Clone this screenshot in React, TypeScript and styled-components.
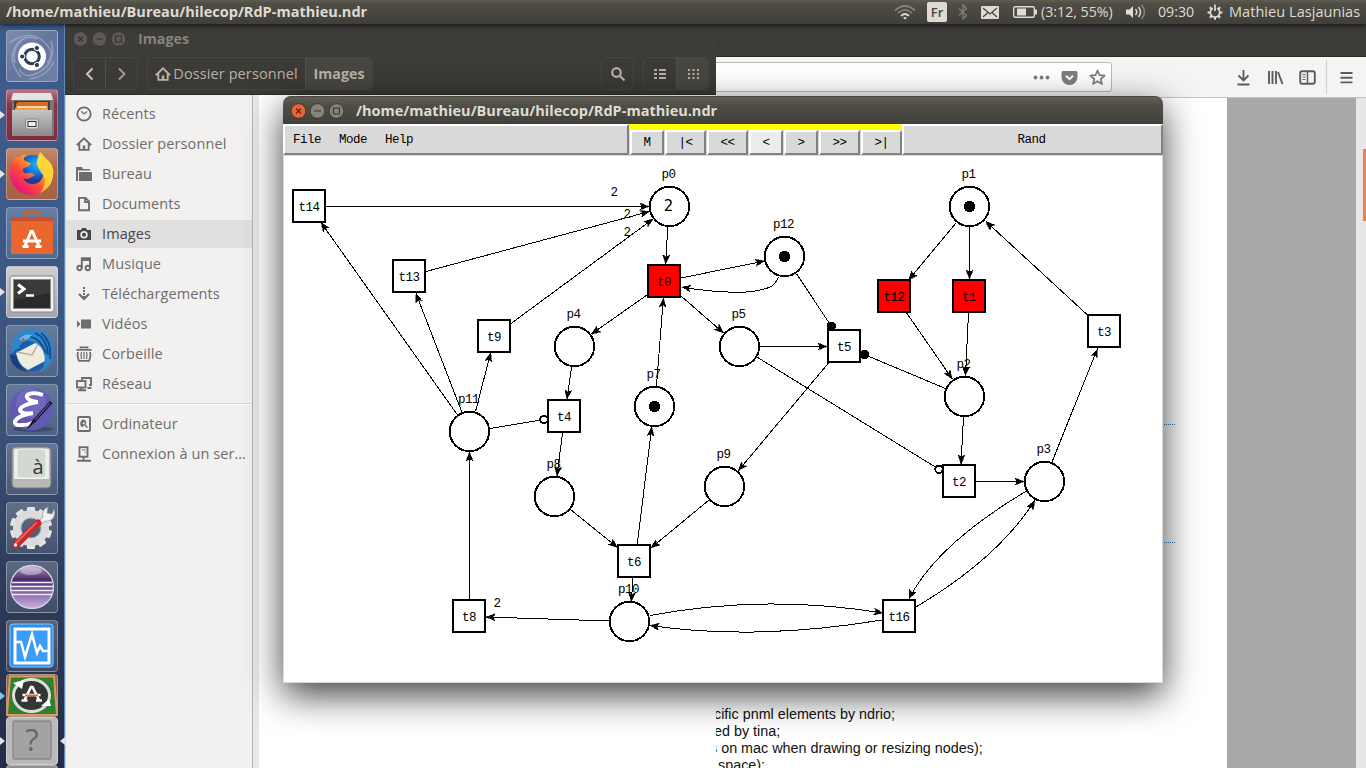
import React from "react";
import styled, { createGlobalStyle, css } from "styled-components";

const GlobalStyle = createGlobalStyle`
  * { box-sizing: border-box; }
  html, body { margin: 0; padding: 0; }
  body { overflow: hidden; }
  svg { display: block; flex: none; }
`;

const uiFont = `"Open Sans", "Noto Sans", sans-serif`;
const monoFont = `"Liberation Mono", "DejaVu Sans Mono", monospace`;

const Desktop = styled.div`
  position: relative;
  display: flex;
  flex-direction: column;
  width: 1366px;
  height: 768px;
  overflow: hidden;
  background: #2b3a5c;
  font-family: ${uiFont};
  font-size: 14.5px;
`;

const Label = styled.span<{ $size?: number; $bold?: boolean; $spacing?: number }>`
  font-size: ${(p) => p.$size ?? 14.5}px;
  font-weight: ${(p) => (p.$bold ? 700 : 400)};
  letter-spacing: ${(p) => p.$spacing ?? 0}px;
  line-height: 20px;
  white-space: nowrap;
`;

/* ---------- top panel ---------- */

const TopPanel = styled.header`
  display: flex;
  align-items: center;
  justify-content: space-between;
  height: 24px;
  flex: none;
  padding: 0 6px;
  color: #dfdbd2;
  background: linear-gradient(#5f5d50, #504e46 15%, #3f3e38);
  box-shadow: 0 1px 5px rgba(0, 0, 0, 0.75);
  z-index: 3;
`;

const Indicators = styled.div`
  display: flex;
  align-items: center;
  height: 24px;
`;

const Indicator = styled.div<{ $width: number; $gap?: number }>`
  display: flex;
  align-items: center;
  gap: ${(p) => p.$gap ?? 4}px;
  width: ${(p) => p.$width}px;
  flex: none;
`;

const LanguageBadge = styled.span`
  width: 20px;
  height: 20px;
  border-radius: 2px;
  background: #dfdbd2;
  color: #45433d;
  font-size: 13px;
  font-weight: 600;
  line-height: 20px;
  text-align: center;
`;

/* ---------- launcher ---------- */

const Body = styled.div`
  display: flex;
  flex: 1;
  min-height: 0;
`;

const Launcher = styled.nav`
  display: flex;
  flex-direction: column;
  gap: 7px;
  width: 65px;
  flex: none;
  padding: 6px 0 0 6px;
  border-right: 1px solid #6688b8;
  background: linear-gradient(#3c5b8c, #3d5c8c 20%, #3a5178 55%, #2e3c5a 75%, #222c46);
`;

const Tile = styled.div<{ $bg?: string; $height?: number }>`
  position: relative;
  display: flex;
  align-items: center;
  justify-content: center;
  width: 52px;
  height: ${(p) => p.$height ?? 52}px;
  flex: none;
  border-radius: 4px;
  border: 1px solid rgba(255, 255, 255, 0.3);
  background: ${(p) => p.$bg ?? "linear-gradient(rgba(255,255,255,.22), rgba(255,255,255,.1))"};
`;

const LauncherEnd = styled.div`
  display: flex;
  flex-direction: column;
  margin-top: -5px;
`;

const RunMarker = styled.i<{ $color?: string; $right?: boolean }>`
  position: absolute;
  top: 50%;
  margin-top: -4px;
  border: 4px solid transparent;
  ${(p) =>
    p.$right
      ? css`right: -8px; border-right: 5px solid #e4e4e4; border-left: 0;`
      : css`left: -7px; border-left: 5px solid ${p.$color ?? "#e4e4e4"}; border-right: 0;`}
`;

/* ---------- files window ---------- */

const FilesWindow = styled.section`
  position: absolute;
  left: 65px;
  top: 24px;
  width: 651px;
  height: 744px;
  display: flex;
  flex-direction: column;
  background: #fff;
  z-index: 1;
`;

const FilesHeader = styled.div`
  height: 71px;
  flex: none;
  background: linear-gradient(#3b3a36, #3e3d38 30%, #393834);
  border-bottom: 1px solid #2d2c29;
`;

const FilesTitle = styled.div`
  display: flex;
  align-items: center;
  gap: 4px;
  height: 30px;
  padding-left: 8px;
  color: #85837b;
`;

const FilesToolbar = styled.div`
  display: flex;
  align-items: center;
  height: 39px;
  padding: 0 7px 0 8px;
`;

const ButtonGroup = styled.div<{ $ml?: string }>`
  display: flex;
  height: 33px;
  margin-left: ${(p) => p.$ml ?? "0"};
  border: 1px solid #474640;
  border-radius: 5px;
  overflow: hidden;
`;

const HeaderButton = styled.div<{ $width: number; $active?: boolean }>`
  display: flex;
  align-items: center;
  justify-content: center;
  gap: 2px;
  width: ${(p) => p.$width}px;
  color: #b5b1a6;
  background: ${(p) => (p.$active ? "#474640" : "transparent")};
  & + & { border-left: 1px solid #504f49; }
`;

const FilesBody = styled.div`
  display: flex;
  flex: 1;
  min-height: 0;
`;

const Sidebar = styled.aside`
  display: flex;
  flex-direction: column;
  gap: 2px;
  width: 188px;
  padding-top: 5px;
  border-left: 1px solid #d5d4d2;
  border-right: 1px solid #b4b3b1;
  background: #f2f1f0;
`;

const Gutter = styled.div`
  width: 6px;
  background: #eae9e8;
`;

const SidebarRow = styled.div<{ $selected?: boolean }>`
  display: flex;
  align-items: center;
  gap: 10px;
  height: 28px;
  flex: none;
  padding-left: 10px;
  color: ${(p) => (p.$selected ? "#464646" : "#6e6d6b")};
  background: ${(p) => (p.$selected ? "#e1e0df" : "transparent")};
`;

const Separator = styled.div`
  height: 2px;
  flex: none;
  margin: 3px 0;
  border-top: 1px solid #d8d7d6;
  background: #fafafa;
`;

/* ---------- browser window ---------- */

const BrowserWindow = styled.section`
  position: absolute;
  left: 716px;
  top: 24px;
  width: 650px;
  height: 744px;
  display: flex;
  flex-direction: column;
`;

const BrowserTitle = styled.div`
  height: 33px;
  flex: none;
  background: #3c3b37;
  border-bottom: 1px solid #2c2b28;
`;

const BrowserToolbar = styled.div`
  display: flex;
  align-items: center;
  justify-content: space-between;
  height: 41px;
  flex: none;
  padding: 0 11px 0 0;
  color: #5c5c5b;
  background: #f5f4f3;
  border-bottom: 1px solid #c5c4c2;
`;

const UrlBar = styled.div`
  display: flex;
  align-items: center;
  justify-content: flex-end;
  gap: 11px;
  width: 396px;
  height: 30px;
  padding-right: 5px;
  color: #7d7d7c;
  background: #fff;
  border: 1px solid #bcbab8;
  border-left: 0;
  border-radius: 0 4px 4px 0;
`;

const BrowserTools = styled.div`
  display: flex;
  align-items: center;
  gap: 15px;
`;

const ToolDivider = styled.div`
  width: 1px;
  height: 34px;
  margin: 0 -4px 0 -5px;
  background: #d0cfce;
`;

const BrowserBody = styled.div`
  display: flex;
  flex: 1;
  min-height: 0;
`;

const WebPage = styled.div`
  width: 511px;
  padding-top: 326px;
  background: #fff;
  font-family: "Liberation Sans", Arial, sans-serif;
  color: #111;
`;

const DottedLink = styled.div`
  width: 459px;
  height: 1px;
  margin-bottom: 117px;
  border-bottom: 1px dotted #2a7ab8;
`;

const PageLines = styled.div`
  padding-top: 46px;
`;

const PageLine = styled.p<{ $indent: number }>`
  margin: 0 0 0 ${(p) => p.$indent}px;
  font-size: 14.35px;
  line-height: 17px;
  white-space: nowrap;
`;

const PageMargin = styled.div`
  width: 129px;
  background: #a9a9a9;
`;

const Scrollbar = styled.div`
  display: flex;
  justify-content: flex-end;
  flex: 1;
  padding-top: 51px;
  background: #e8e7e6;
`;

const ScrollThumb = styled.div`
  width: 3px;
  height: 72px;
  background: #ef7d4e;
`;

/* ---------- editor window ---------- */

const EditorWindow = styled.main`
  position: absolute;
  left: 283px;
  top: 96px;
  width: 880px;
  height: 587px;
  display: flex;
  flex-direction: column;
  border-radius: 8px 8px 0 0;
  background: #d9d9d9;
  box-shadow: 0 12px 36px rgba(0, 0, 0, 0.75);
  z-index: 2;
`;

const EditorTitle = styled.div`
  display: flex;
  align-items: center;
  gap: 4px;
  height: 28px;
  flex: none;
  padding: 0 8px;
  color: #dfdbd2;
  border-radius: 8px 8px 0 0;
  border-top: 1px solid #4a493f;
  background: linear-gradient(#615f54, #504e46 30%, #403f3a);
`;

const TitleSpacer = styled.div<{ $width: number }>`
  width: ${(p) => p.$width}px;
`;

const MenuBar = styled.div`
  display: flex;
  height: 31px;
  flex: none;
  font-family: ${monoFont};
  font-size: 12.5px;
  letter-spacing: -0.5px;
  color: #000;
`;

const raised = css`
  background: #d9d9d9;
  border-style: solid;
  border-width: 2px;
  border-color: #fff #828282 #828282 #fff;
`;

const Menus = styled.div`
  ${raised}
  display: flex;
  align-items: center;
  gap: 18px;
  width: 346px;
  padding-left: 8px;
`;

const StepperGroup = styled.div`
  display: flex;
  gap: 1px;
  width: 273px;
  padding: 6px 0 0 1px;
  background: linear-gradient(#ff0 0 6px, #d9d9d9 6px);
`;

const StepButton = styled.div<{ $width: number; $hover?: boolean }>`
  ${raised}
  display: flex;
  align-items: center;
  justify-content: center;
  width: ${(p) => p.$width}px;
  flex: none;
  background: ${(p) => (p.$hover ? "#ececec" : "#d9d9d9")};
`;

const ModePanel = styled.div`
  ${raised}
  display: flex;
  flex: 1;
  align-items: center;
  justify-content: center;
  padding-right: 2px;
`;

const Canvas = styled.div`
  flex: 1;
  margin: 1px 1px 1px 1px;
  background: #fff;
`;

/* ---------- icons ---------- */

type WindowDotProps = { kind: "close" | "min" | "max"; fill: string; ink: string };
const WindowDot = ({ kind, fill, ink }: WindowDotProps) => (
  <svg width="15" height="16" viewBox="0 0 15 16">
    <circle cx="7.5" cy="8" r="7.3" fill={fill} stroke="#35342f" strokeWidth=".8" />
    <g stroke={ink} strokeWidth="1.1" fill="none">
      {kind === "close" && <path d="M5 5.5l5 5M10 5.5l-5 5" />}
      {kind === "min" && <path d="M4 8h7" />}
      {kind === "max" && <rect x="4.5" y="5" width="6" height="6" />}
    </g>
  </svg>
);

const HomeIcon = () => (
  <svg width="16" height="16" viewBox="0 0 16 16" fill="none" stroke="currentColor" strokeWidth="1.9">
    <path d="M.8 9.2L8 2.4l7.2 6.8M3.3 7.5v6.4h9.4V7.5" />
    <path d="M8 9.5v4" strokeWidth="2.6" />
  </svg>
);

const sidebarIcons: Record<string, React.ReactNode> = {
  recent: (
    <g fill="none" stroke="currentColor">
      <circle cx="8" cy="8" r="6.7" strokeWidth="1.8" />
      <path d="M5.2 5.2L8 7.9l3.2-2.4" strokeWidth="1.3" />
    </g>
  ),
  desktop: (
    <g fill="currentColor">
      <path d="M0 1h6l1 2h7v1.500H2V15H0z" />
      <path d="M3 6h13v9H3z" />
    </g>
  ),
  documents: <path d="M3 1.9h6.5L13 5.4v8.8H3zM9 2v4h4" fill="none" stroke="currentColor" strokeWidth="1.9" />,
  pictures: (
    <g>
      <path d="M1 4h4l1-2h4l1 2h4v10H1z" fill="currentColor" />
      <circle cx="8" cy="8.7" r="2.9" fill="none" stroke="#e8e8e7" strokeWidth="1.7" />
    </g>
  ),
  music: (
    <g fill="none" stroke="currentColor" strokeWidth="1.9">
      <path d="M5.8 12V2.2H14V11M6 4h8" />
      <circle cx="3.5" cy="12" r="2.2" />
      <circle cx="11.8" cy="12" r="2.2" />
    </g>
  ),
  downloads: (
    <g fill="none" stroke="currentColor">
      <path d="M8 1v11" strokeWidth="2" strokeDasharray="2 1" />
      <path d="M3 8l5 5 5-5" strokeWidth="2.2" />
    </g>
  ),
  videos: <path d="M5 3.5h10v9H5zM1 4.5L4.5 8 1 11.5z" fill="currentColor" />,
  trash: (
    <g fill="none" stroke="currentColor">
      <path d="M4.5 2.5V1.3h7v1.2M.5 3.8h15" strokeWidth="1.8" />
      <path d="M2 6c-1 4 0 7 1 8.8h10c1-1.800 2-4.800 1-8.800" strokeWidth="1.8" />
      <path d="M5.500 6c-1 3-.5 5 0 7M8 6v7M10.500 6c1 3 .5 5 0 7" strokeWidth="1.200" />
    </g>
  ),
  network: (
    <g fill="none" stroke="currentColor" strokeWidth="1.9">
      <path d="M6 4V2h9v7h-2" />
      <rect x="1" y="5" width="8.500" height="6.500" />
      <path d="M2 14.200h8M11.500 12h4M5.300 11v3" />
    </g>
  ),
  computer: (
    <g>
      <rect x="2" y="1" width="12" height="14" rx="1" fill="none" stroke="currentColor" strokeWidth="1.9" />
      <path d="M8 3.500a4 4 0 0 0-1 7.800l1-2.300 3 3 1-1-2.300-2.300A4 4 0 0 0 8 3.500z" fill="currentColor" />
      <circle cx="7.800" cy="7.300" r="1.100" fill="#f2f1f0" />
    </g>
  ),
  server: (
    <g fill="none" stroke="currentColor">
      <rect x="3.500" y="1.200" width="8" height="9.500" strokeWidth="1.900" />
      <path d="M7.500 11v3M1 14.800h14" strokeWidth="1.900" />
      <path d="M6 4h3.500M9 6v1" strokeWidth="1" />
    </g>
  ),
};

const SidebarIcon = ({ name }: { name: string }) =>
  name === "home" ? (
    <HomeIcon />
  ) : (
    <svg width="16" height="16" viewBox="0 0 16 16">
      {sidebarIcons[name]}
    </svg>
  );

const WifiIcon = () => (
  <svg width="22" height="16" viewBox="0 0 22 16" fill="none" strokeWidth="1.7">
    <path d="M1 6.500Q11-2.500 21 6.500" stroke="#85837b" />
    <path d="M4 9.200Q11 2.500 18 9.200" stroke="#85837b" />
    <path d="M7 11.800q4-3.600 8 0" stroke="#dfdbd2" />
    <path d="M9 13.800q2-1.500 4 0l-2 1.700z" fill="#dfdbd2" stroke="none" />
  </svg>
);

const BluetoothIcon = () => (
  <svg width="10" height="16" viewBox="0 0 10 16" fill="none" stroke="#807e77" strokeWidth="1.300">
    <path d="M1 4.500l7.500 7L5 15V1l3.500 3.500-7.500 7" />
  </svg>
);

const MailIcon = () => (
  <svg width="18" height="13" viewBox="0 0 18 13">
    <rect width="18" height="13" rx="1" fill="#dfdbd2" />
    <path d="M2 2l7 6 7-6M2 11l5-4.500M16 11l-5-4.500" fill="none" stroke="#45433d" strokeWidth="1.200" />
  </svg>
);

const BatteryIcon = () => (
  <svg width="24" height="12" viewBox="0 0 24 12">
    <rect x=".7" y=".7" width="20.600" height="10.600" rx="1.500" fill="none" stroke="#dfdbd2" strokeWidth="1.400" />
    <path d="M4 2.500h9v7H4zM22 3.500h2v5h-2z" fill="#dfdbd2" />
  </svg>
);

const VolumeIcon = () => (
  <svg width="20" height="16" viewBox="0 0 20 16">
    <path d="M0 5.500h3.500L7 2v12l-3.500-3.500H0z" fill="#dfdbd2" />
    <g fill="none" strokeWidth="1.500">
      <path d="M9.500 5q2.500 3 0 6M12.500 3q4 5 0 10" stroke="#dfdbd2" />
      <path d="M15.500 1q6 7 0 14" stroke="#85837b" />
    </g>
  </svg>
);

const SessionIcon = () => (
  <svg width="16" height="16" viewBox="0 0 16 16" fill="none" stroke="#dfdbd2">
    <path d="M5.800 4.300a4.700 4.700 0 1 0 4.400 0" strokeWidth="1.700" />
    <path d="M8 .5v6.500" strokeWidth="1.700" />
    <path d="M.5 8.500h3M12.500 8.500h3M8 13v2.800M2.800 3.300l2 2M11.200 5.300l2-2M2.800 13.700l2-2M11.200 11.700l2 2" strokeWidth="2" />
  </svg>
);

const BrowserIcon = ({ name }: { name: string }) => (
  <svg width="17" height="17" viewBox="0 0 17 17" fill="none" stroke="currentColor" strokeWidth="1.900">
    {name === "more" && (
      <g fill="currentColor" stroke="none">
        <circle cx="2.500" cy="8.500" r="1.900" />
        <circle cx="8.500" cy="8.500" r="1.900" />
        <circle cx="14.500" cy="8.500" r="1.900" />
      </g>
    )}
    {name === "pocket" && (
      <g>
        <path d="M.5 3.500q0-1.500 1.500-1.500h13q1.500 0 1.500 1.500V8a8 8 0 0 1-16 0z" fill="currentColor" stroke="none" />
        <path d="M5 6.800l3.500 3.400L12 6.800" stroke="#fff" strokeWidth="2" />
      </g>
    )}
    {name === "star" && <path d="M8.500 1.500l2 4.700 5.200.4-4 3.400 1.300 5-4.500-2.700L4 15l1.300-5-4-3.400 5.200-.4z" strokeWidth="1.700" strokeLinejoin="round" />}
    {name === "download" && <path d="M8.500 1v10M3.500 6.500l5 5 5-5M2.500 15.500h12" />}
    {name === "library" && <path d="M2 2v13M5.500 2v13M9 2v13M11 3l4.500 12" />}
    {name === "sidebar" && (
      <g>
        <rect x="1.200" y="2.200" width="14.600" height="12.600" rx="2" />
        <path d="M8.500 3v11" strokeWidth="1.500" />
        <path d="M3.500 5.500h3M3.500 8h3M3.500 10.500h3" strokeWidth="1.100" />
      </g>
    )}
    {name === "menu" && <path d="M2.500 4h12M2.500 8.700h12M2.500 13.400h12" />}
  </svg>
);

const teeth = (count: number, r: number, w: number, len: number, fill: string) =>
  Array.from({ length: count }, (_, i) => (
    <rect key={i} x={-w / 2} y={-r - len} width={w} height={len + 3} rx="1" fill={fill} transform={`rotate(${(i * 360) / count})`} />
  ));

const DashArt = () => (
  <svg width="50" height="50" viewBox="0 0 50 50">
    <g fill="none" stroke="#b6c2d8" strokeWidth="1.600" opacity=".5">
      <path d="M2 12Q22-2 36 10T40 32" />
      <path d="M44 10Q50 30 34 40T12 38" />
      <path d="M14 46Q0 30 8 16T30 8" />
      <path d="M22 48Q40 46 47 30M8 32Q4 14 20 6" />
    </g>
    <circle cx="25" cy="25.500" r="14" fill="#fff" />
    <circle cx="25" cy="25.500" r="7.300" fill="none" stroke="#2f3d58" strokeWidth="3" />
    {[180, 60, -60].map((a) => (
      <g key={a} transform={`translate(25 25.500) rotate(${a})`}>
        <circle cx="9.800" r="3" fill="#fff" />
        <circle cx="9.800" r="2.100" fill="#2f3d58" />
      </g>
    ))}
  </svg>
);

const FilesArt = () => (
  <svg width="50" height="50" viewBox="0 0 50 50">
    <defs>
      <linearGradient id="cab" x2="0" y2="1"><stop stopColor="#c4c4c4" /><stop offset="1" stopColor="#8b8b8b" /></linearGradient>
    </defs>
    <path d="M5 3h40l2 5v38H5z" fill="#777" />
    <path d="M6 3h38l2 7H4z" fill="#e4e4e4" />
    <path d="M7 11h36v9H7z" fill="#4b3a30" />
    <path d="M9 14l2-2h30v10H9z" fill="#d76a25" />
    <path d="M10 16h30v5H10z" fill="#f3d6a8" />
    <path d="M8 18h33v4H8z" fill="#f0a040" />
    <rect x="5" y="20" width="40" height="26" fill="url(#cab)" />
    <rect x="18.500" y="29" width="13" height="10" rx="2" fill="#d6d6d6" stroke="#888" />
    <rect x="21" y="31.500" width="8" height="5" fill="#eee" stroke="#333" />
  </svg>
);

const FirefoxArt = () => (
  <svg width="50" height="50" viewBox="0 0 50 50">
    <defs>
      <linearGradient id="fox" x1=".9" y1=".1" x2=".2" y2=".9">
        <stop stopColor="#ffe83a" /><stop offset=".35" stopColor="#ffa120" /><stop offset=".65" stopColor="#ff4a3a" /><stop offset="1" stopColor="#e8127c" />
      </linearGradient>
      <radialGradient id="globe" cx=".6" cy=".3"><stop stopColor="#18b4f4" /><stop offset=".6" stopColor="#0f72dc" /><stop offset="1" stopColor="#1e3a9c" /></radialGradient>
    </defs>
    <circle cx="26" cy="22" r="16" fill="url(#globe)" />
    <path d="M8 9q-5 8-5 17a21.500 20.500 0 0 0 43-1q0-8-6-14-3-3-7-8 0 4-2 7-3 4 0 8 6 2 5 9-3 9-12 8-6-1-8-6 3 2 7 0l5-3q-3-3-7-2-5 1-5-3 0-2 4-3 3-1 4-4-4-1-7-3-1-3 3-5-5-1-8 3-3-2-4-2z" fill="url(#fox)" />
    <path d="M33 3q5 6 9 9 6 7 4 15-2 12-13 17 7-9 4-17-7-7-7-14 0-5 3-10z" fill="#ffd83a" opacity=".85" />
  </svg>
);

const SoftwareArt = () => (
  <svg width="50" height="50" viewBox="0 0 50 50">
    <path d="M18 14V7q0-3 3-3h8q3 0 3 3v7" fill="none" stroke="#c4603c" strokeWidth="3" />
    <path d="M4 9h42v4H4z" fill="#c9502a" />
    <path d="M4 13h42v33H4z" fill="#e9672f" />
    <g fill="none" stroke="#fff" strokeWidth="3">
      <path d="M18 38l6-14.500h1.500L32 38M16 33h18M15.500 38.500h6M28.500 38.500h6" />
    </g>
  </svg>
);

const TerminalArt = () => (
  <svg width="50" height="50" viewBox="0 0 50 50">
    <rect x="3" y="9" width="44" height="36" rx="2" fill="#f1f1ef" stroke="#85858a" />
    <rect x="6.500" y="12.500" width="37" height="29" fill="#2a2a28" stroke="#8a8a88" />
    <path d="M7 13h36v13L7 33z" fill="#fff" opacity=".08" />
    <path d="M11 17.500l6 4.500-6 4.500" fill="none" stroke="#fff" strokeWidth="3" />
    <path d="M19 28.500h8" stroke="#fff" strokeWidth="2.500" />
  </svg>
);

const ThunderbirdArt = () => (
  <svg width="50" height="50" viewBox="0 0 50 50">
    <circle cx="25" cy="25" r="20" fill="#1c5ba6" />
    <path d="M9 27l23-12 10 18-21 11q-9-4-12-17z" fill="#efebdf" />
    <path d="M10 26l15 3 7-13" fill="none" stroke="#b7b09d" strokeWidth="1.500" />
    <path d="M4 19Q9 4 24 3q18 0 23 18 1 18-15 26 9-10 4-22-4-9-15-10-8 0-9 8-3-1-6 4-2-3-2-8z" fill="#2d86cc" />
    <path d="M28 7q12 5 13 22M34 7q11 8 9 26M22 10q12 3 17 17" fill="none" stroke="#174985" strokeWidth="1.800" />
    <path d="M12 13q6-6 13-4-4 5-11 6z" fill="#69bde8" />
    <circle cx="16" cy="13.500" r="1.600" fill="#d35b25" />
    <path d="M3 28q0 15 18 18-10-6-12-16z" fill="#193f7b" />
  </svg>
);

const EmacsArt = () => (
  <svg width="50" height="50" viewBox="0 0 50 50">
    <ellipse cx="26" cy="44" rx="20" ry="3" fill="#222c4a" opacity=".4" />
    <circle cx="24.500" cy="24" r="21.500" fill="#6259b5" />
    <circle cx="24" cy="18" r="15" fill="#8179c8" opacity=".45" />
    <path d="M36 10q-8-3-14-1-5 3 1 6 4 2 8 2-10 1-16 5-5 4 2 6 4 1 9 0-14 2-18 8-1 5 7 4 8 0 11-3" fill="none" stroke="#fff" strokeWidth="3.800" />
    <path d="M19 45l6-9 18-20 2.500 2-18 20z" fill="#18142e" />
    <path d="M28 35l15-17" stroke="#7b76a8" strokeWidth="1" />
  </svg>
);

const KeyboardArt = () => (
  <svg width="50" height="50" viewBox="0 0 50 50">
    <rect x="5" y="3" width="39" height="41" rx="4" fill="#b8b9b4" stroke="#777b7b" />
    <rect x="7" y="5" width="35" height="30" fill="#eceee9" />
    <rect x="10" y="5" width="29" height="29" rx="3" fill="#d3d8d0" stroke="#f4f4f0" />
    <text x="31" y="30" textAnchor="middle" fontFamily={uiFont} fontSize="20" fill="#30343a">à</text>
  </svg>
);

const SettingsArt = () => (
  <svg width="50" height="50" viewBox="0 0 50 50">
    <g transform="translate(24 25)">
      {teeth(10, 16, 8, 5, "#e4e4e4")}
      <circle r="14" fill="none" stroke="#dcdcdc" strokeWidth="8" />
      <circle r="10" fill="none" stroke="#aaa" strokeWidth="1" />
    </g>
    <path d="M28 22l8-8q-2-7 5-10l-1 6 5 1 2-5q2 8-3 11-3 2-6 1l-7 7z" fill="#f2f2f2" stroke="#999" strokeWidth=".8" />
    <path d="M9 42L31 20" stroke="#c52a2c" strokeWidth="7" strokeLinecap="round" />
    <path d="M9 40L29 20" stroke="#e8605f" strokeWidth="1.800" strokeLinecap="round" />
    <circle cx="8.500" cy="42" r="1.700" fill="#eee" />
  </svg>
);

const EclipseArt = () => (
  <svg width="50" height="50" viewBox="0 0 50 50">
    <defs>
      <linearGradient id="ecl" x2="0" y2="1"><stop stopColor="#b39ccc" /><stop offset=".32" stopColor="#4a2a68" /><stop offset=".5" stopColor="#6a4c92" /><stop offset="1" stopColor="#c9b4e2" /></linearGradient>
    </defs>
    <circle cx="25" cy="25" r="21.500" fill="url(#ecl)" stroke="#d8cfe4" strokeWidth="1.300" />
    <path d="M5 20.500h40M4 24.500h42M4 28.500h42M5 32.500h40" stroke="#efe8f6" strokeWidth="1.500" />
    <ellipse cx="24" cy="9" rx="11" ry="4" fill="#fff" opacity=".4" />
  </svg>
);

const MonitorArt = () => (
  <svg width="50" height="50" viewBox="0 0 50 50">
    <rect x="3" y="3" width="43" height="43" rx="3" fill="#2a8ff0" stroke="#8ccaff" />
    <rect x="8" y="8" width="34" height="34" fill="#3a9cf6" stroke="#fff" strokeWidth="3" />
    <path d="M9 21h5l4 15 7-23 5 19 3-7 3 5h6" fill="none" stroke="#fff" strokeWidth="2.500" />
  </svg>
);

const UpdaterArt = () => (
  <svg width="54" height="42" viewBox="0 0 54 42">
    <path d="M5 1.500h44l3 38.500H2z" fill="#2f8030" stroke="#e09664" strokeWidth="2" />
    <ellipse cx="26.500" cy="20.500" rx="18" ry="16" fill="#353633" stroke="#ddd" strokeWidth="3" />
    <path d="M8 8l11-3-2 9zM46 31l-2-7-8 7z" fill="#fff" />
    <path d="M19.500 25l6.500-13h1.500l6.500 13M17.500 20h18M16.500 25.500h6M31 25.500h6" fill="none" stroke="#fff" strokeWidth="2.600" />
    <path d="M20 20.500h13" stroke="#e8672c" strokeWidth="2" />
  </svg>
);

const UnknownArt = () => (
  <svg width="50" height="46" viewBox="0 0 50 46">
    <rect x="6" y="3" width="38" height="38" rx="1" fill="#a3a3a3" stroke="#777" />
    <text x="25" y="33" textAnchor="middle" fontFamily={uiFont} fontSize="31" fill="#666">?</text>
  </svg>
);

/* ---------- Petri net ---------- */

type Place = { id: string; x: number; y: number; tokens?: number };
type Transition = { id: string; x: number; y: number; enabled?: boolean };
type Arc = { d: string; end: [number, number]; angle: number; kind?: "arrow" | "inhibitor" | "read" };

const places: Place[] = [
  { id: "p0", x: 669, y: 206, tokens: 2 },
  { id: "p1", x: 969, y: 206, tokens: 1 },
  { id: "p12", x: 784, y: 256, tokens: 1 },
  { id: "p4", x: 574, y: 346 },
  { id: "p5", x: 739, y: 346 },
  { id: "p7", x: 654, y: 406, tokens: 1 },
  { id: "p2", x: 964, y: 396 },
  { id: "p11", x: 469, y: 431 },
  { id: "p8", x: 554, y: 496 },
  { id: "p9", x: 724, y: 486 },
  { id: "p3", x: 1044, y: 481 },
  { id: "p10", x: 629, y: 621 },
];

const transitions: Transition[] = [
  { id: "t14", x: 309, y: 206 },
  { id: "t13", x: 409, y: 276 },
  { id: "t9", x: 494, y: 336 },
  { id: "t0", x: 664, y: 281, enabled: true },
  { id: "t12", x: 894, y: 296, enabled: true },
  { id: "t1", x: 969, y: 296, enabled: true },
  { id: "t3", x: 1104, y: 331 },
  { id: "t5", x: 844, y: 346 },
  { id: "t4", x: 564, y: 416 },
  { id: "t2", x: 959, y: 481 },
  { id: "t6", x: 634, y: 561 },
  { id: "t8", x: 469, y: 616 },
  { id: "t16", x: 899, y: 616 },
];

const line = (x1: number, y1: number, x2: number, y2: number, kind: Arc["kind"] = "arrow"): Arc => ({
  d: `M${x1} ${y1}L${x2} ${y2}`,
  end: [x2, y2],
  angle: (Math.atan2(y2 - y1, x2 - x1) * 180) / Math.PI,
  kind,
});

const curve = (d: string, x: number, y: number, angle: number): Arc => ({ d: `${d} ${x} ${y}`, end: [x, y], angle });

const arcs: Arc[] = [
  line(326, 206.5, 649, 206.5),
  line(426, 271.5, 649.5, 211.5),
  line(511, 323.5, 653, 219),
  line(667.7, 227, 665.7, 264),
  line(681, 278, 764.5, 261),
  curve("M778.700 277Q775 285 769 287.500Q755 292.500 737 292.300Q710 292", 681.5, 287, 190),
  line(647, 295, 591.5, 334),
  line(681, 296, 723.5, 333),
  line(656.500, 386, 663.3, 298),
  line(571.7, 366.5, 567, 399),
  line(760, 346.5, 827, 346.5),
  line(757.3, 357.3, 939, 469.3, "inhibitor"),
  line(796.700, 274, 831.3, 326.3, "read"),
  line(945, 388.3, 864.300, 354.5, "read"),
  line(828.500, 363, 738.3, 470.7),
  line(637.300, 544, 651.7, 427),
  line(489.700, 428.5, 544, 419.5, "inhibitor"),
  line(457.500, 415, 321, 222.500),
  line(461.700, 411.700, 416, 293.500),
  line(475.500, 411.500, 490.700, 352.700),
  line(956, 223, 908.500, 280),
  line(969.500, 227, 969.500, 279),
  line(906.700, 313, 952.300, 379),
  line(968.500, 313, 965.500, 375.500),
  line(1087, 314.500, 986, 221.500),
  line(963.500, 417, 961, 464),
  line(976, 481.500, 1024, 481.500),
  line(1052, 462, 1097.500, 348.500),
  curve("M1026.500 491Q936 545", 909, 599, 114),
  curve("M916 607Q998.500 558", 1034.700, 500.500, -60),
  curve("M650 615.500Q766 593.800", 883, 613, 9),
  curve("M882 620Q755 641", 650, 625.500, 188),
  line(609.500, 621, 486, 617),
  line(469.500, 599, 469.500, 452),
  line(562.500, 433, 557, 476),
  line(570.500, 509.500, 617.500, 547.500),
  line(709, 500, 651, 548),
  line(633, 578, 631.300, 601.500),
];

const weights: [number, number][] = [[614, 196], [627, 218], [627, 236], [497, 607]];

const NetText = styled.text`
  font-family: ${monoFont};
  font-size: 12.5px;
  letter-spacing: -0.5px;
  text-anchor: middle;
  fill: #000;
`;

const TokenCount = styled.text`
  font-family: "DejaVu Sans", sans-serif;
  font-size: 15px;
  text-anchor: middle;
  fill: #000;
`;

const PetriNet = () => (
  <svg width="878" height="526" viewBox="284 156 878 526">
    <g shapeRendering="crispEdges" stroke="#000">
      {arcs.map((a, i) => (
        <g key={i}>
          <path d={a.d} fill="none" strokeWidth="1" />
          {a.kind === "inhibitor" && <circle cx={a.end[0]} cy={a.end[1]} r="3.700" fill="#fff" strokeWidth="2" />}
          {a.kind === "read" && <circle cx={a.end[0]} cy={a.end[1]} r="4.800" stroke="none" />}
          {(!a.kind || a.kind === "arrow") && (
            <path d="M0 0L-9-3.500L-7 0L-9 3.500Z" strokeWidth=".5" transform={`translate(${a.end[0]} ${a.end[1]}) rotate(${a.angle})`} />
          )}
        </g>
      ))}
      {places.map((p) => (
        <g key={p.id}>
          <circle cx={p.x + 0.5} cy={p.y + 0.5} r="19.700" fill="none" strokeWidth="1.900" />
          {p.tokens === 1 && <circle cx={p.x + 0.5} cy={p.y + 0.5} r="5.700" stroke="none" />}
        </g>
      ))}
      {transitions.map((t) => (
        <rect key={t.id} x={t.x - 16} y={t.y - 16} width="32" height="32" strokeWidth="2" fill={t.enabled ? "#f00" : "#fff"} />
      ))}
    </g>
    {places.map((p) => (
      <NetText key={p.id} x={p.x - 0.5} y={p.y - 28}>{p.id}</NetText>
    ))}
    {transitions.map((t) => (
      <NetText key={t.id} x={t.x} y={t.y + 5}>{t.id}</NetText>
    ))}
    {weights.map(([x, y]) => (
      <NetText key={`${x}-${y}`} x={x} y={y}>2</NetText>
    ))}
    <TokenCount x="668.500" y="211">2</TokenCount>
  </svg>
);

const sidebarTop: [string, string][] = [
  ["recent", "Récents"],
  ["home", "Dossier personnel"],
  ["desktop", "Bureau"],
  ["documents", "Documents"],
  ["pictures", "Images"],
  ["music", "Musique"],
  ["downloads", "Téléchargements"],
  ["videos", "Vidéos"],
  ["trash", "Corbeille"],
  ["network", "Réseau"],
];

const sidebarBottom: [string, string][] = [
  ["computer", "Ordinateur"],
  ["server", "Connexion à un ser…"],
];

const steps: [string, number, boolean][] = [
  ["M", 34, false],
  ["|<", 41, false],
  ["<<", 41, false],
  ["<", 34, true],
  [">", 34, false],
  [">>", 41, false],
  [">|", 41, false],
];

const title = "/home/mathieu/Bureau/hilecop/RdP-mathieu.ndr";

export default function App() {
  return (
    <Desktop>
      <GlobalStyle />
      <TopPanel>
        <Label $bold>{title}</Label>
        <Indicators>
          <Indicator $width={33}><WifiIcon /></Indicator>
          <Indicator $width={31}><LanguageBadge>Fr</LanguageBadge></Indicator>
          <Indicator $width={23}><BluetoothIcon /></Indicator>
          <Indicator $width={32}><MailIcon /></Indicator>
          <Indicator $width={113}><BatteryIcon /><Label $size={14.2}>(3:12, 55%)</Label></Indicator>
          <Indicator $width={32}><VolumeIcon /></Indicator>
          <Indicator $width={49}><Label $size={14.2}>09:30</Label></Indicator>
          <Indicator $width={153} $gap={6}><SessionIcon /><Label $spacing={0.05}>Mathieu Lasjaunias</Label></Indicator>
        </Indicators>
      </TopPanel>

      <Body>
        <Launcher>
          <Tile $bg="linear-gradient(135deg,#7d8cae,#66759b 50%,#7281a6)"><DashArt /></Tile>
          <Tile $bg="linear-gradient(#bb7482,#8c3447 30%,#7c2f40)"><RunMarker /><FilesArt /></Tile>
          <Tile $bg="linear-gradient(#c58a6c,#ae6a4a 40%,#a66344)"><RunMarker /><FirefoxArt /></Tile>
          <Tile><SoftwareArt /></Tile>
          <Tile $bg="linear-gradient(#cfcfd2,#a6a7ad)"><RunMarker /><TerminalArt /></Tile>
          <Tile><ThunderbirdArt /></Tile>
          <Tile><EmacsArt /></Tile>
          <Tile><KeyboardArt /></Tile>
          <Tile><SettingsArt /></Tile>
          <Tile><EclipseArt /></Tile>
          <Tile><MonitorArt /></Tile>
          <LauncherEnd>
            <Tile $height={43} $bg="#8a6a50"><RunMarker $color="#7fc4e8" /><UpdaterArt /></Tile>
            <Tile $height={48} $bg="#b9b9b9"><RunMarker /><UnknownArt /><RunMarker $right /></Tile>
            <Tile $height={20} $bg="#8f9094" />
          </LauncherEnd>
        </Launcher>
      </Body>

      <BrowserWindow>
        <BrowserTitle />
        <BrowserToolbar>
          <UrlBar>
            <BrowserIcon name="more" />
            <BrowserIcon name="pocket" />
            <BrowserIcon name="star" />
          </UrlBar>
          <BrowserTools>
            <BrowserIcon name="download" />
            <BrowserIcon name="library" />
            <BrowserIcon name="sidebar" />
            <ToolDivider />
            <BrowserIcon name="menu" />
          </BrowserTools>
        </BrowserToolbar>
        <BrowserBody>
          <WebPage>
            <DottedLink />
            <DottedLink />
            <PageLines>
              <PageLine $indent={-2}>cific pnml elements by ndrio;</PageLine>
              <PageLine $indent={-2}>ed by tina;</PageLine>
              <PageLine $indent={-6}>s on mac when drawing or resizing nodes);</PageLine>
              <PageLine $indent={2}>space);</PageLine>
            </PageLines>
          </WebPage>
          <PageMargin />
          <Scrollbar><ScrollThumb /></Scrollbar>
        </BrowserBody>
      </BrowserWindow>

      <FilesWindow>
        <FilesHeader>
          <FilesTitle>
            <WindowDot kind="close" fill="#5d5b54" ink="#34332f" />
            <WindowDot kind="min" fill="#5d5b54" ink="#34332f" />
            <WindowDot kind="max" fill="#5d5b54" ink="#34332f" />
            <TitleSpacer $width={4} />
            <Label $bold $size={14.3}>Images</Label>
          </FilesTitle>
          <FilesToolbar>
            <ButtonGroup>
              <HeaderButton $width={31}>
                <svg width="10" height="14" viewBox="0 0 10 14" fill="none" stroke="#c8c4b9" strokeWidth="2"><path d="M7.500 1.500L2 7l5.500 5.500" /></svg>
              </HeaderButton>
              <HeaderButton $width={32}>
                <svg width="10" height="14" viewBox="0 0 10 14" fill="none" stroke="#a09c92" strokeWidth="2"><path d="M2 1.500L7.500 7 2 12.500" /></svg>
              </HeaderButton>
            </ButtonGroup>
            <ButtonGroup $ml="9px">
              <HeaderButton $width={157}><HomeIcon /><Label $spacing={0.1}>Dossier personnel</Label></HeaderButton>
              <HeaderButton $width={67} $active><Label $bold $size={14.3}>Images</Label></HeaderButton>
            </ButtonGroup>
            <ButtonGroup $ml="auto">
              <HeaderButton $width={31}>
                <svg width="16" height="16" viewBox="0 0 16 16" fill="none" stroke="currentColor" strokeWidth="2.200"><circle cx="6.500" cy="6.500" r="4.300" /><path d="M9.500 9.500l5 5" /></svg>
              </HeaderButton>
            </ButtonGroup>
            <ButtonGroup $ml="9px">
              <HeaderButton $width={32}>
                <svg width="12" height="12" viewBox="0 0 12 12" stroke="currentColor" strokeWidth="2"><path d="M0 2h3M5 2h7M0 6h3M5 6h7M0 10h3M5 10h7" /></svg>
              </HeaderButton>
              <HeaderButton $width={32} $active>
                <svg width="12" height="12" viewBox="0 0 12 12" stroke="currentColor" strokeWidth="2" strokeDasharray="2 2.500"><path d="M1 2h11M1 6h11M1 10h11" /></svg>
              </HeaderButton>
            </ButtonGroup>
          </FilesToolbar>
        </FilesHeader>
        <FilesBody>
          <Sidebar>
            {sidebarTop.map(([icon, text]) => (
              <SidebarRow key={text} $selected={text === "Images"}>
                <SidebarIcon name={icon} />
                <Label $spacing={0.1}>{text}</Label>
              </SidebarRow>
            ))}
            <Separator />
            {sidebarBottom.map(([icon, text]) => (
              <SidebarRow key={text}>
                <SidebarIcon name={icon} />
                <Label $spacing={0.1}>{text}</Label>
              </SidebarRow>
            ))}
          </Sidebar>
          <Gutter />
        </FilesBody>
      </FilesWindow>

      <EditorWindow>
        <EditorTitle>
          <WindowDot kind="close" fill="#ee6437" ink="#47251a" />
          <WindowDot kind="min" fill="#85837a" ink="#3b3a35" />
          <WindowDot kind="max" fill="#85837a" ink="#3b3a35" />
          <TitleSpacer $width={4} />
          <Label $bold>{title}</Label>
        </EditorTitle>
        <MenuBar>
          <Menus><span>File</span><span>Mode</span><span>Help</span></Menus>
          <StepperGroup>
            {steps.map(([text, width, hover]) => (
              <StepButton key={text} $width={width} $hover={hover}>{text}</StepButton>
            ))}
          </StepperGroup>
          <ModePanel>Rand</ModePanel>
        </MenuBar>
        <Canvas><PetriNet /></Canvas>
      </EditorWindow>
    </Desktop>
  );
}
